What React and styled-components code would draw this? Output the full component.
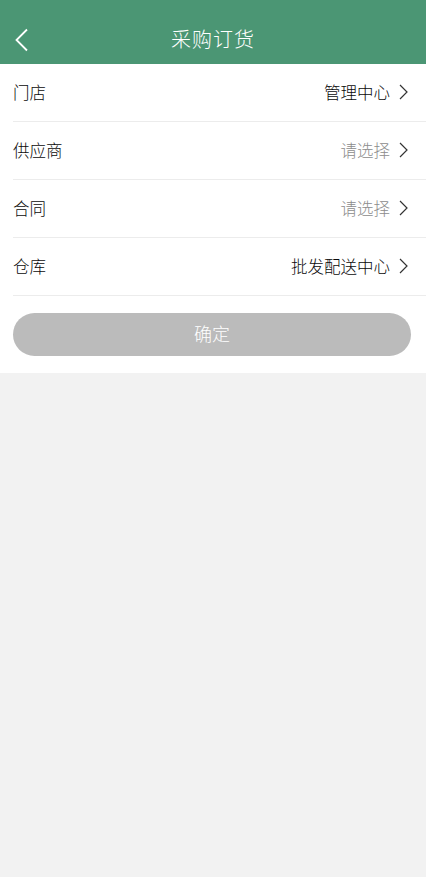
import React from 'react';
import styled, { createGlobalStyle } from 'styled-components';

const GlobalStyle = createGlobalStyle`
    html, body {
        margin: 0;
        padding: 0;
        background: #f2f2f2;
        font-family: "Noto Sans CJK SC", "Noto Sans", sans-serif;
    }
`;

const Page = styled.div`
    min-height: 877px;
    background: #f2f2f2;
`;

const Header = styled.div`
    height: 64px;
    background: #4b9674;
    display: flex;
    align-items: flex-end;
`;

const HeaderInner = styled.div`
    height: 48px;
    width: 100%;
    display: flex;
    align-items: center;
    justify-content: center;
    position: relative;
`;

const BackBtn = styled.div`
    position: absolute;
    left: 14px;
    top: 12px;
    display: flex;
`;

const Title = styled.h1`
    margin: 0 0 4px;
    color: #fff;
    font-size: 20px;
    font-weight: 300;
    letter-spacing: 1px;
`;

const Panel = styled.div`
    background: #fff;
    padding-bottom: 17px;
`;

const Row = styled.div`
    box-sizing: border-box;
    height: 58px;
    margin-left: 13px;
    padding: 0 18px 2px 0;
    display: flex;
    align-items: center;
    justify-content: space-between;
    border-bottom: 1px solid #ececec;
`;

const Label = styled.span`
    font-size: 16.5px;
    font-weight: 300;
    color: #0a0a0a;
`;

const Value = styled.span`
    display: flex;
    align-items: center;
    gap: 9px;
    font-size: 16.5px;
    font-weight: 300;
    color: ${p => (p.$placeholder ? '#8c8c8c' : '#0a0a0a')};
`;

const Confirm = styled.button`
    display: block;
    margin: 17px 15px 0 13px;
    width: calc(100% - 28px);
    height: 43px;
    padding: 0 0 3px;
    border: none;
    border-radius: 22px;
    background: #bbbbbb;
    color: #fff;
    font-family: inherit;
    font-size: 18px;
    font-weight: 300;
`;

const Chevron = () => (
    <svg width="9" height="16" viewBox="0 0 9 16">
        <path d="M1 1l7 7-7 7" fill="none" stroke="#333" strokeWidth="1.2" />
    </svg>
);

const rows = [
    { label: '门店', value: '管理中心' },
    { label: '供应商', value: '请选择', placeholder: true },
    { label: '合同', value: '请选择', placeholder: true },
    { label: '仓库', value: '批发配送中心' },
];

export default function App() {
    return <Page>
        <GlobalStyle />
        <Header>
            <HeaderInner>
                <BackBtn>
                    <svg width="16" height="24" viewBox="0 0 16 24">
                        <path d="M13 1.5L2.5 12 13 22.5" fill="none" stroke="#fff" strokeWidth="1.8" />
                    </svg>
                </BackBtn>
                <Title>采购订货</Title>
            </HeaderInner>
        </Header>
        <Panel>
            {rows.map(r => (
                <Row key={r.label}>
                    <Label>{r.label}</Label>
                    <Value $placeholder={r.placeholder}>{r.value}<Chevron /></Value>
                </Row>
            ))}
            <Confirm>确定</Confirm>
        </Panel>
    </Page>;
}
